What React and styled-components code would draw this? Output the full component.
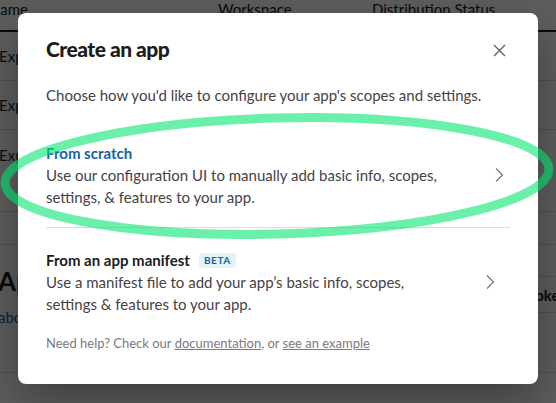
import React from 'react'
import styled, { createGlobalStyle } from 'styled-components'

const GlobalStyle = createGlobalStyle`
  html, body {
    margin: 0;
    padding: 0;
    background: #ffffff;
    font-family: Lato, 'Noto Sans', sans-serif;
    overflow: hidden;
  }
`

const Screen = styled.div`
  position: relative;
  width: 556px;
  height: 403px;
  overflow: hidden;
  background: #ffffff;
  color: #1d1c1d;
`

/* page behind the dialog */
const Table = styled.div`
  margin-left: -11px;
  width: 580px;
`

const HeadRow = styled.div`
  display: grid;
  grid-template-columns: 229px 154px 1fr;
  height: 30px;
  border-bottom: 2px solid #1d1c1d;
  font-size: 15px;
  line-height: 18px;
`

const Row = styled.div`
  display: flex;
  align-items: ${p => (p.top ? 'flex-start' : 'center')};
  height: ${p => p.h}px;
  padding-top: ${p => (p.top ? 16 : 0)}px;
  box-sizing: border-box;
  padding-left: 10px;
  border-bottom: 1px solid #dddddd;
  font-size: 15px;
`

const Section = styled.div`
  display: flex;
  justify-content: space-between;
  height: 127px;
  border-bottom: 1px solid #dddddd;
`

const SectionText = styled.div`
  padding-top: 16px;
  margin-left: -2px;
`

const SectionTitle = styled.div`
  font-size: 26px;
  font-weight: 700;
  line-height: 40px;
  white-space: nowrap;
`

const SectionLink = styled.div`
  margin-top: 7px;
  font-size: 15px;
  color: #1264a3;
  line-height: 18px;
  white-space: nowrap;
`

const SideTable = styled.div`
  width: 28px;
  padding-top: 31px;
  overflow: hidden;
`

const SideRow = styled.div`
  height: 35px;
  border-top: 1px solid #dddddd;
  border-bottom: 1px solid #dddddd;
  display: flex;
  align-items: center;
  font-size: 15px;
  font-weight: 700;
  white-space: nowrap;
`

const Dim = styled.div`
  position: absolute;
  inset: 0;
  background: rgba(0, 0, 0, 0.63);
`

/* dialog */
const Modal = styled.div`
  position: absolute;
  left: 18px;
  top: 13px;
  width: 520px;
  height: 371px;
  box-sizing: border-box;
  background: #ffffff;
  border-radius: 8px;
  box-shadow: 0 18px 48px rgba(0, 0, 0, 0.35);
  padding: 20px 28px 0;
  display: flex;
  flex-direction: column;
`

const Header = styled.div`
  display: flex;
  align-items: center;
  justify-content: space-between;
  height: 30px;
`

const Title = styled.h1`
  margin: 0;
  font-size: 21px;
  font-weight: 900;
  letter-spacing: -0.5px;
  color: #1d1c1d;
`

const Close = styled.button`
  border: 0;
  background: none;
  padding: 0;
  margin-right: 3px;
  margin-top: 4px;
  width: 16px;
  height: 16px;
  display: flex;
  align-items: center;
  justify-content: center;
  color: #616061;
`

const Lead = styled.p`
  margin: 21px 0 0;
  font-size: 15px;
  line-height: 22px;
  color: #454245;
  white-space: nowrap;
`

const Options = styled.div`
  margin-top: 20px;
  display: flex;
  flex-direction: column;
`

const Option = styled.div`
  display: flex;
  align-items: center;
  justify-content: space-between;
  padding: ${p => (p.first ? '16px 0 19px' : '21px 0 18px')};
  border-bottom: ${p => (p.first ? '1px solid #dddddd' : 'none')};
`

const OptionText = styled.div`
  display: flex;
  flex-direction: column;
`

const OptionTitle = styled.div`
  display: flex;
  align-items: center;
  gap: 9px;
  font-size: 15px;
  font-weight: 700;
  line-height: 22px;
  color: ${p => (p.active ? '#1264a3' : '#1d1c1d')};
`

const OptionDesc = styled.div`
  font-size: 15px;
  line-height: 22px;
  color: #454245;
`

const Badge = styled.span`
  font-size: 10px;
  font-weight: 700;
  letter-spacing: 0.6px;
  line-height: 15px;
  padding: 0 5px;
  border-radius: 3px;
  color: #1264a3;
  background: #e3f3fa;
`

const Chevron = styled.span`
  display: flex;
  margin-right: ${p => (p.active ? 6 : 15)}px;
  color: #7c7a7f;
`

const Help = styled.p`
  margin: 0;
  font-size: 13px;
  line-height: 20px;
  color: #7c7a7f;
  a {
    color: #7c7a7f;
    text-decoration: underline;
  }
`

const Mark = styled.svg`
  position: absolute;
  left: 0;
  top: 0;
  pointer-events: none;
`

function ChevronIcon() {
  return (
    <svg width="10" height="16" viewBox="0 0 10 16">
      <path d="M2 1.5 L8.5 8 L2 14.5" fill="none" stroke="currentColor" strokeWidth="1.3" />
    </svg>
  )
}

function App() {
  return (
    <>
      <GlobalStyle />
      <Screen>
        <Table>
          <HeadRow>
            <span>Name</span>
            <span>Workspace</span>
            <span>Distribution Status</span>
          </HeadRow>
          <Row h={49}>Expired</Row>
          <Row h={49}>Expired</Row>
          <Row h={82} top>Expired</Row>
          <Row h={33} />
        </Table>
        <Section>
          <SectionText>
            <SectionTitle>App Credentials</SectionTitle>
            <SectionLink>about tokens</SectionLink>
          </SectionText>
          <SideTable>
            <SideRow>Tokens</SideRow>
          </SideTable>
        </Section>
        <Dim />

        <Modal>
          <Header>
            <Title>Create an app</Title>
            <Close aria-label="Close">
              <svg width="13" height="13" viewBox="0 0 13 13">
                <path d="M1 1 L12 12 M12 1 L1 12" stroke="currentColor" strokeWidth="1.4" />
              </svg>
            </Close>
          </Header>
          <Lead>Choose how you'd like to configure your app's scopes and settings.</Lead>
          <Options>
            <Option first>
              <OptionText>
                <OptionTitle active>From scratch</OptionTitle>
                <OptionDesc>
                  Use our configuration UI to manually add basic info, scopes,
                  <br />
                  settings, &amp; features to your app.
                </OptionDesc>
              </OptionText>
              <Chevron active>
                <ChevronIcon />
              </Chevron>
            </Option>
            <Option>
              <OptionText>
                <OptionTitle>
                  From an app manifest <Badge>BETA</Badge>
                </OptionTitle>
                <OptionDesc>
                  Use a manifest file to add your app’s basic info, scopes,
                  <br />
                  settings &amp; features to your app.
                </OptionDesc>
              </OptionText>
              <Chevron>
                <ChevronIcon />
              </Chevron>
            </Option>
          </Options>
          <Help>
            Need help? Check our <a href="#docs">documentation</a>, or <a href="#example">see an example</a>
          </Help>
        </Modal>

        <Mark width="556" height="403" viewBox="0 0 556 403">
          <ellipse
            cx="277"
            cy="176"
            rx="272"
            ry="58"
            transform="rotate(-1.5 277 176)"
            fill="none"
            stroke="rgb(0, 230, 110)"
            strokeOpacity="0.58"
            strokeWidth="9"
          />
        </Mark>
      </Screen>
    </>
  )
}

export default App
